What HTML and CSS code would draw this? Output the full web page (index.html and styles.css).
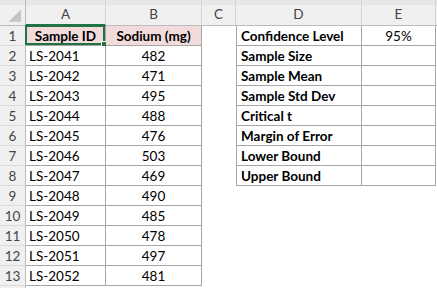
FILE: index.html
```html
<!DOCTYPE html>
<html>
<head>
<meta charset="utf-8">
<link rel="stylesheet" href="styles.css">
</head>
<body>
<div class="sheet">
  <div class="ch corner"><svg width="26" height="26" viewBox="0 0 26 26"><polygon points="22,9 22,22 9,22" fill="#c4c4c4"/></svg></div>
  <div class="ch sel-col">A</div>
  <div class="ch">B</div>
  <div class="ch">C</div>
  <div class="ch">D</div>
  <div class="ch">E</div>
  <div class="ch last"></div>

  <div class="rh">1</div>
  <div class="c t head sel">Sample ID<span class="selbox"><span class="handle"></span></span></div>
  <div class="c t head ctr">Sodium (mg)</div>
  <div class="c"></div>
  <div class="c t dl b">Confidence Level</div>
  <div class="c t ctr">95%</div>
  <div class="c"></div>

  <div class="rh">2</div>
  <div class="c t">LS-2041</div><div class="c t ctr">482</div><div class="c"></div>
  <div class="c t dl b">Sample Size</div><div class="c t"></div><div class="c"></div>

  <div class="rh">3</div>
  <div class="c t">LS-2042</div><div class="c t ctr">471</div><div class="c"></div>
  <div class="c t dl b">Sample Mean</div><div class="c t"></div><div class="c"></div>

  <div class="rh">4</div>
  <div class="c t">LS-2043</div><div class="c t ctr">495</div><div class="c"></div>
  <div class="c t dl b">Sample Std Dev</div><div class="c t"></div><div class="c"></div>

  <div class="rh">5</div>
  <div class="c t">LS-2044</div><div class="c t ctr">488</div><div class="c"></div>
  <div class="c t dl b">Critical t</div><div class="c t"></div><div class="c"></div>

  <div class="rh">6</div>
  <div class="c t">LS-2045</div><div class="c t ctr">476</div><div class="c"></div>
  <div class="c t dl b">Margin of Error</div><div class="c t"></div><div class="c"></div>

  <div class="rh">7</div>
  <div class="c t">LS-2046</div><div class="c t ctr">503</div><div class="c"></div>
  <div class="c t dl b">Lower Bound</div><div class="c t"></div><div class="c"></div>

  <div class="rh">8</div>
  <div class="c t">LS-2047</div><div class="c t ctr">469</div><div class="c"></div>
  <div class="c t dl b">Upper Bound</div><div class="c t"></div><div class="c"></div>

  <div class="rh">9</div>
  <div class="c t">LS-2048</div><div class="c t ctr">490</div><div class="c"></div>
  <div class="c"></div><div class="c"></div><div class="c"></div>

  <div class="rh">10</div>
  <div class="c t">LS-2049</div><div class="c t ctr">485</div><div class="c"></div>
  <div class="c"></div><div class="c"></div><div class="c"></div>

  <div class="rh">11</div>
  <div class="c t">LS-2050</div><div class="c t ctr">478</div><div class="c"></div>
  <div class="c"></div><div class="c"></div><div class="c"></div>

  <div class="rh">12</div>
  <div class="c t">LS-2051</div><div class="c t ctr">497</div><div class="c"></div>
  <div class="c"></div><div class="c"></div><div class="c"></div>

  <div class="rh">13</div>
  <div class="c t">LS-2052</div><div class="c t ctr">481</div><div class="c"></div>
  <div class="c"></div><div class="c"></div><div class="c"></div>

  <div class="rh rest"></div>
</div>
</body>
</html>
```
FILE: styles.css
```css
* { box-sizing: border-box; }
html, body { margin: 0; padding: 0; background: #fff; }
body { width: 437px; height: 288px; overflow: hidden; font-family: Lato, "Noto Sans", sans-serif; font-size: 13.5px; color: #000; }
.sheet {
  display: grid;
  grid-template-columns: 26px 80px 96px 34px 126px 74px 1px;
  grid-template-rows: 26px repeat(13, 20px) 3px;
}
.ch {
  background: linear-gradient(#e6e6e6 0 5px, #f0f0f0 5px);
  border-bottom: 1px solid #bcbcbc;
  border-right: 1px solid #d4d4d4;
  color: #444;
  display: flex; align-items: flex-end; justify-content: center;
  padding-bottom: 3px;
  line-height: 16px;
}
.ch.corner { padding: 0; border-right: 1px solid #bcbcbc; align-items: stretch; justify-content: stretch; }
.ch.corner svg { display: block; }
.ch.sel-col { border-bottom: 2px solid #217346; padding-bottom: 2px; }
.ch.last { border-right: none; }
.rh {
  grid-column: 1;
  background: #f0f0f0;
  border-right: 1px solid #bcbcbc;
  border-bottom: 1px solid #dadada;
  color: #444;
  display: flex; align-items: center; justify-content: center;
  padding-top: 1px;
}
.rh.rest { border-bottom: none; }
.c { background: #fff; line-height: 19px; padding: 1px 3px 0 3px; white-space: nowrap; overflow: visible; position: relative; }
.c.t { border-right: 1px solid #a6a6a6; border-bottom: 1px solid #a6a6a6; }
.c.dl { border-left: 1px solid #a6a6a6; padding-left: 4px; }
.head { background: #f2dcdb; font-weight: 700; text-align: center; }
.ctr { text-align: center; }
.b { font-weight: 700; }
.selbox {
  position: absolute; left: -1px; top: -1px; right: 0; bottom: 0;
  border: 2px solid #217346;
  pointer-events: none;
}
.handle {
  position: absolute; right: -5px; bottom: -5px;
  width: 7px; height: 7px;
  background: #217346;
  border: 1px solid #fff;
}
```
